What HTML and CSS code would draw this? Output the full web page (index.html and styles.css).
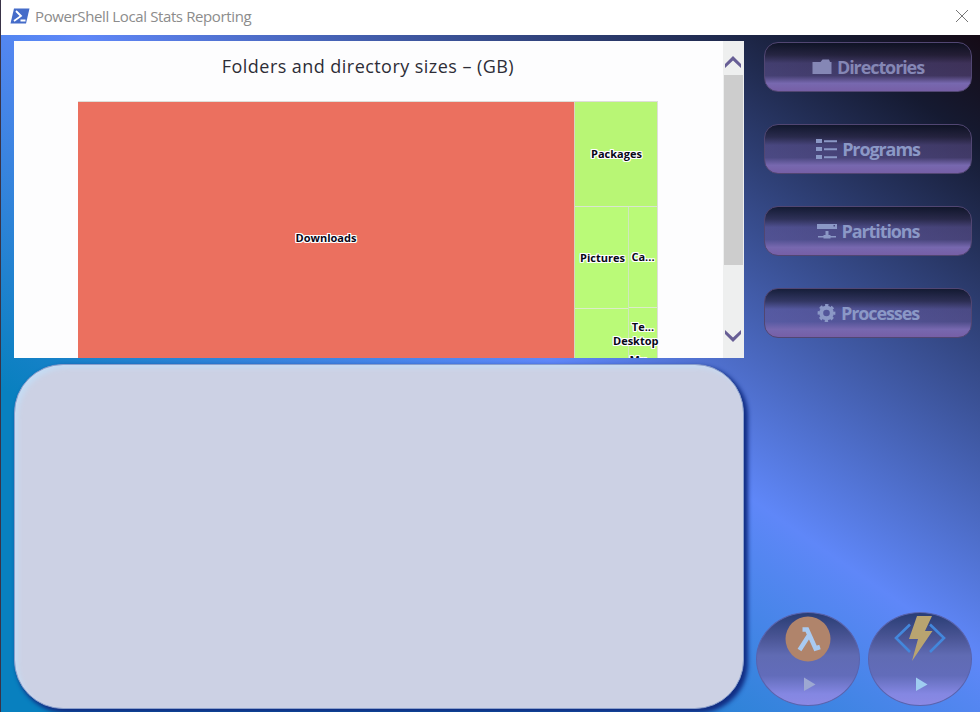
FILE: index.html
```html
<!DOCTYPE html>
<html lang="en">
<head>
<meta charset="utf-8">
<title>PowerShell Local Stats Reporting</title>
<link rel="stylesheet" href="styles.css">
</head>
<body>
<div class="window">
  <header class="titlebar">
    <svg class="logo" width="20" height="16" viewBox="0 0 20 16"><path d="M4 .5H19.5L16 15.5H.5Z" fill="#456cc9"/><path d="M6 3l5 5-7 5M10.500 12.500h5" fill="none" stroke="#fff" stroke-width="1.800"/></svg>
    <h1 class="title">PowerShell Local Stats Reporting</h1>
    <svg class="close" width="14" height="14" viewBox="0 0 14 14"><path d="M1 1l12 12M13 1L1 13" stroke="#777" fill="none"/></svg>
  </header>
  <main class="content">
    <section class="left">
      <div class="report">
        <div class="chart">
          <h2 class="chart-title">Folders and directory sizes – (GB)</h2>
          <div class="treemap">
            <div class="cell downloads"><span>Downloads</span></div>
            <div class="side">
              <div class="cell packages"><span>Packages</span></div>
              <div class="cols">
                <div class="col-a"><div class="cell pictures"><span>Pictures</span></div><div class="cell desktop"><span>Desktop</span></div></div>
                <div class="col-b"><div class="cell cache"><span>Ca...</span></div><div class="cell temp"><span>Te...</span><span class="more">Mu...</span></div></div>
              </div>
            </div>
          </div>
        </div>
        <div class="scrollbar">
          <svg class="up" width="18" height="14" viewBox="0 0 18 14"><path d="M1 9L9 1l8 8v4L9 5.500 1 13Z" fill="#675e95"/></svg>
          <div class="thumb"></div>
          <svg class="down" width="18" height="14" viewBox="0 0 18 14"><path d="M1 1l8 7.500L17 1v4L9 13 1 5Z" fill="#675e95"/></svg>
        </div>
      </div>
      <div class="output"></div>
    </section>
    <aside class="right">
      <nav class="menu">
        <button class="btn b1"><svg width="20" height="16" viewBox="0 0 20 16"><path d="M.5 3H8.500L10.500 .5H17L18 3H19.500V15H.5Z" fill="currentColor"/></svg><span>Directories</span></button>
        <button class="btn b2"><svg width="21" height="21" viewBox="0 0 21 21"><path d="M0 0h6v4H0zM8 1.300h13v2H8zM0 8h6v4H0zM8 9.300h13v2H8zM0 16h6v4H0zM8 17.300h13v2H8z" fill="currentColor"/></svg><span>Programs</span></button>
        <button class="btn b3"><svg width="20" height="16" viewBox="0 0 20 16"><path fill-rule="evenodd" d="M0 1h20v5H0zM16.500 2v1.500H18V2zM8.500 8h3v4h2v1H19v1.500H13.500v1h-7v-1H1V13H6.500v-1h2z" fill="currentColor"/></svg><span>Partitions</span></button>
        <button class="btn b4"><svg width="19" height="18" viewBox="-9.500 -9 19 18"><circle r="5.300" fill="none" stroke="currentColor" stroke-width="4"/><circle r="7.600" fill="none" stroke="currentColor" stroke-width="2.600" stroke-dasharray="3.300 2.670" stroke-dashoffset="1.650"/></svg><span>Processes</span></button>
      </nav>
      <div class="rounds">
        <button class="round"><svg width="104" height="94" viewBox="0 0 104 94"><circle cx="52" cy="27" r="22.500" fill="#b0846b"/><path d="M46.500 17.500h4.500L59.500 36.500l4.500-1.500M52.500 24L43.500 38" fill="none" stroke="#a9caf1" stroke-width="4.500"/><path d="M48 65.500l11.500 7L48 79Z" fill="#9da8d2"/></svg></button>
        <button class="round"><svg width="104" height="94" viewBox="0 0 104 94"><path d="M42 12.500L28 26l14 14M62 12.500L76 26 62 40" fill="none" stroke="#4387dc" stroke-width="2.600"/><path d="M49 4H64L57 19H64.500L44 49 50 27H41Z" fill="#b9a470"/><path d="M48 65.500l11.500 7L48 79Z" fill="#9fcdf1"/></svg></button>
      </div>
    </aside>
  </main>
</div>
</body>
</html>
```
FILE: styles.css
```css
* { box-sizing: border-box; }
body { margin: 0; overflow: hidden; font-family: "Open Sans", "Noto Sans", sans-serif; }
.window { width: 980px; height: 712px; display: flex; flex-direction: column; border-left: 1px solid #393347; }
.titlebar { height: 35px; flex: none; display: flex; align-items: center; padding: 0 11px 3px 9px; background: #fff; }
.logo { margin-right: 5px; }
.title { margin: 0; flex: 1; font-size: 15px; font-weight: 400; letter-spacing: -.38px; color: #8c8c8c; line-height: 20px; }
.content { flex: 1; display: flex; padding: 6px 7px 0 13px; background: linear-gradient(to bottom left, #150b16 0%, #151a31 8%, #5f87f8 46%, #0880bf 76%, #0880bf 100%); }
.left { width: 731px; flex: none; }
.report { width: 730px; height: 317px; display: flex; background: #fdfdfe; overflow: hidden; }
.chart { width: 709px; padding: 13px 0 0 64px; }
.chart-title { width: 580px; margin: 0 0 23px; text-align: center; font: 400 18px/24px "Open Sans", sans-serif; letter-spacing: .45px; color: #2d2d37; white-space: nowrap; }
.treemap { width: 580px; height: 274px; display: flex; border: 1px solid #deded8; border-left: 0; }
.cell { display: flex; align-items: center; justify-content: center; font: 700 11px/14px "Open Sans", sans-serif; color: #080818; text-shadow: -1px -1px #fff, 1px -1px #fff, -1px 1px #fff, 1px 1px #fff, 0 -1px #fff, 0 1px #fff, -1px 0 #fff, 1px 0 #fff; background: #bafa78; white-space: nowrap; }
.downloads { width: 497px; background: #eb705f; border-right: 1px solid #d9d3c4; }
.side { width: 82px; }
.packages { height: 105px; padding-left: 1px; border-bottom: 1px solid #d9e5d1; background: #b8f675; }
.cols { display: flex; height: 169px; }
.col-a { width: 54px; border-right: 1px solid #cfe7bd; }
.col-b { width: 28px; }
.pictures { height: 102px; padding-left: 2px; border-bottom: 1px solid #dcecc9; }
.cache { height: 101px; border-bottom: 1px solid #dcecc9; }
.desktop { height: 67px; position: relative; }
.desktop span { position: absolute; z-index: 2; left: 38px; top: 25px; }
.temp { height: 68px; flex-direction: column; justify-content: flex-start; padding-top: 12px; }
.more { margin-top: 19px; }
.scrollbar { width: 21px; flex: none; background: #eeefef; padding: 14px 1px 14px 1px; display: flex; flex-direction: column; align-items: flex-start; }
.thumb { width: 19px; height: 190px; margin: 6px 0 64px; background: #cdcdcd; flex: none; }
.up, .down { flex: none; }
.output { width: 730px; height: 345px; margin-top: 6px; border: 1px solid #8a9fcc; border-radius: 49px; background: #ccd1e4; box-shadow: inset 4px 4px 5px -1px #c5dcf4, 3px 3px 4px 1px #112d83; }
.right { flex: 1; display: flex; flex-direction: column; justify-content: space-between; padding: 1px 0 6px 11px; margin-right: -7px; }
.menu { display: flex; flex-direction: column; gap: 32px; padding-left: 8px; }
button { margin: 0; padding: 0; font-family: inherit; }
.btn { width: 208px; height: 50px; display: flex; align-items: center; justify-content: center; gap: 5px; border: 1px solid #514672; border-radius: 14px; color: #8587b5; font-size: 18px; font-weight: 700; background: linear-gradient(rgba(13,17,34,.8) 0%, rgba(43,37,65,.65) 25%, rgba(106,86,151,.48) 42%, rgba(106,86,151,.5) 68%, #7768af 84%, #765fa6 100%); }
.btn span { letter-spacing: -1.1px; }
.b2, .b3, .b4 { color: #8b98c6; }
.rounds { display: flex; gap: 8px; }
.round { width: 104px; height: 94px; border: 1px solid #5963ad; border-radius: 50%; overflow: hidden; background: linear-gradient(#293d74 0%, #4a5595 27%, #606bb3 46%, #626cba 68%, #8487e2 88%, #8b89e4 100%); }
.round svg { display: block; margin: -1px; }
```
